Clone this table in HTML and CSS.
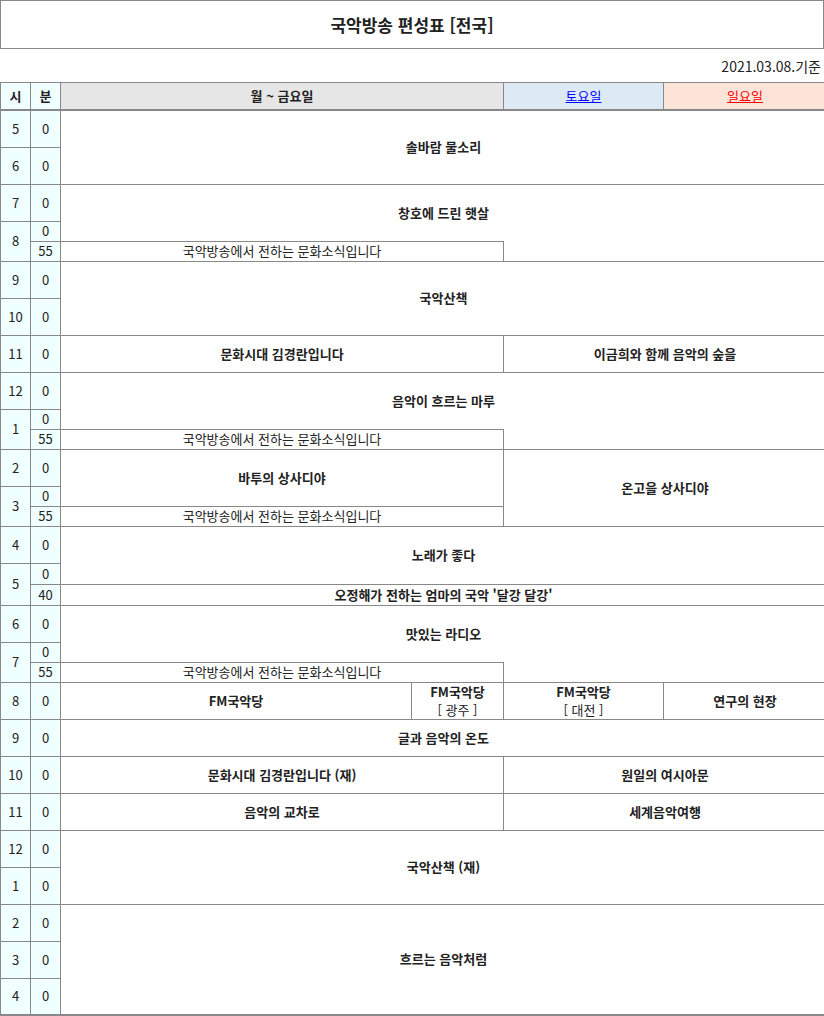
FILE: index.html
```html
<!DOCTYPE html>
<html lang="ko">
<head>
<meta charset="utf-8">
<title>국악방송 편성표</title>
<link rel="stylesheet" href="styles.css">
</head>
<body>
<div class="title">국악방송 편성표 [전국]</div>
<div class="date">2021.03.08.기준</div>
<div class="wrap">
<table class="sched">
<colgroup><col class="c-h"><col class="c-m"><col class="c-a"><col class="c-b"><col class="c-sat"><col class="c-sun"></colgroup>
<thead>
<tr><th class="hm">시</th><th class="hm">분</th><th colspan="2" class="wk">월 ~ 금요일</th><th class="sat"><a href="#">토요일</a></th><th class="sun"><a href="#">일요일</a></th></tr>
</thead>
<tbody>
<tr class="r"><td class="t">5</td><td class="t">0</td><td colspan="4" rowspan="2" class="p">솔바람 물소리</td></tr>
<tr class="r"><td class="t">6</td><td class="t">0</td></tr>
<tr class="r"><td class="t">7</td><td class="t">0</td><td colspan="4" rowspan="2" class="p">창호에 드린 햇살</td></tr>
<tr class="s"><td class="t" rowspan="2">8</td><td class="t">0</td></tr>
<tr class="s"><td class="t">55</td><td colspan="2" class="n">국악방송에서 전하는 문화소식입니다</td><td colspan="2" class="cont"></td></tr>
<tr class="r"><td class="t">9</td><td class="t">0</td><td colspan="4" rowspan="2" class="p">국악산책</td></tr>
<tr class="r"><td class="t">10</td><td class="t">0</td></tr>
<tr class="r"><td class="t">11</td><td class="t">0</td><td colspan="2" class="p">문화시대 김경란입니다</td><td colspan="2" class="p">이금희와 함께 음악의 숲을</td></tr>
<tr class="r"><td class="t">12</td><td class="t">0</td><td colspan="4" rowspan="2" class="p">음악이 흐르는 마루</td></tr>
<tr class="s"><td class="t" rowspan="2">1</td><td class="t">0</td></tr>
<tr class="s"><td class="t">55</td><td colspan="2" class="n">국악방송에서 전하는 문화소식입니다</td><td colspan="2" class="cont"></td></tr>
<tr class="r"><td class="t">2</td><td class="t">0</td><td colspan="2" rowspan="2" class="p">바투의 상사디야</td><td colspan="2" rowspan="3" class="p">온고을 상사디야</td></tr>
<tr class="s"><td class="t" rowspan="2">3</td><td class="t">0</td></tr>
<tr class="s"><td class="t">55</td><td colspan="2" class="n">국악방송에서 전하는 문화소식입니다</td></tr>
<tr class="r"><td class="t">4</td><td class="t">0</td><td colspan="4" rowspan="2" class="p">노래가 좋다</td></tr>
<tr class="s2"><td class="t" rowspan="2">5</td><td class="t">0</td></tr>
<tr class="s2"><td class="t">40</td><td colspan="4" class="p">오정해가 전하는 엄마의 국악 '달강 달강'</td></tr>
<tr class="r"><td class="t">6</td><td class="t">0</td><td colspan="4" rowspan="2" class="p">맛있는 라디오</td></tr>
<tr class="s"><td class="t" rowspan="2">7</td><td class="t">0</td></tr>
<tr class="s"><td class="t">55</td><td colspan="2" class="n">국악방송에서 전하는 문화소식입니다</td><td colspan="2" class="cont"></td></tr>
<tr class="r"><td class="t">8</td><td class="t">0</td><td class="p">FM국악당</td><td class="p two">FM국악당<br><span class="loc">[ 광주 ]</span></td><td class="p two">FM국악당<br><span class="loc">[ 대전 ]</span></td><td class="p">연구의 현장</td></tr>
<tr class="r"><td class="t">9</td><td class="t">0</td><td colspan="4" class="p">글과 음악의 온도</td></tr>
<tr class="r"><td class="t">10</td><td class="t">0</td><td colspan="2" class="p">문화시대 김경란입니다 (재)</td><td colspan="2" class="p">원일의 여시아문</td></tr>
<tr class="r"><td class="t">11</td><td class="t">0</td><td colspan="2" class="p">음악의 교차로</td><td colspan="2" class="p">세계음악여행</td></tr>
<tr class="r"><td class="t">12</td><td class="t">0</td><td colspan="4" rowspan="2" class="p">국악산책 (재)</td></tr>
<tr class="r"><td class="t">1</td><td class="t">0</td></tr>
<tr class="r"><td class="t">2</td><td class="t">0</td><td colspan="4" rowspan="3" class="p">흐르는 음악처럼</td></tr>
<tr class="r"><td class="t">3</td><td class="t">0</td></tr>
<tr class="r"><td class="t">4</td><td class="t">0</td></tr>
</tbody>
</table>
</div>
</body>
</html>
```
FILE: styles.css
```css
html, body {
  margin: 0;
  padding: 0;
  background: #fff;
}
body {
  font-family: "Noto Sans CJK KR", "Noto Sans", sans-serif;
  color: #222;
  font-size: 13px;
}
.title {
  box-sizing: border-box;
  height: 49px;
  border: 1px solid #888;
  display: flex;
  align-items: center;
  justify-content: center;
  font-size: 17px;
  font-weight: 700;
  line-height: 22px;
}
.date {
  height: 33px;
  box-sizing: border-box;
  padding: 7px 3px 0 0;
  text-align: right;
  font-size: 14px;
  line-height: 20px;
}
.wrap {
  overflow: hidden;
  width: 824px;
}
.sched {
  border-collapse: collapse;
  table-layout: fixed;
  width: 826px;
  border-bottom: 2px solid #888;
}
.c-h, .c-m { width: 30px; }
.c-a { width: 351px; }
.c-b { width: 92px; }
.c-sat { width: 160px; }
.c-sun { width: 163px; }
.sched th, .sched td {
  border: 1px solid #888;
  padding: 0;
  text-align: center;
  vertical-align: middle;
}
.sched th {
  height: 26px;
  font-size: 13px;
  font-weight: 700;
  line-height: 18px;
  border-bottom: 2px solid #888;
}
.sched th.hm { background: #f0ffff; }
.sched th.wk { background: #e6e6e6; }
.sched th.sat { background: #ddeaf6; }
.sched th.sun { background: #fde4d8; }
.sched th a { text-decoration: underline; font-weight: 400; }
.sched th.sat a { color: #0000ff; }
.sched th.sun a { color: #ff0000; }
.sched td.t {
  background: #f0ffff;
  font-size: 13px;
  line-height: 18px;
}
.sched tr.r { height: 37px; }
.sched tr.s { height: 20px; }
.sched tr.s2 { height: 21px; }
.sched td.p {
  font-size: 13px;
  font-weight: 700;
  line-height: 18px;
}
.sched td.n {
  font-size: 13px;
  line-height: 18px;
}
.sched td.cont {
  border-top: hidden;
}
.sched .loc {
  font-weight: 400;
}
```
